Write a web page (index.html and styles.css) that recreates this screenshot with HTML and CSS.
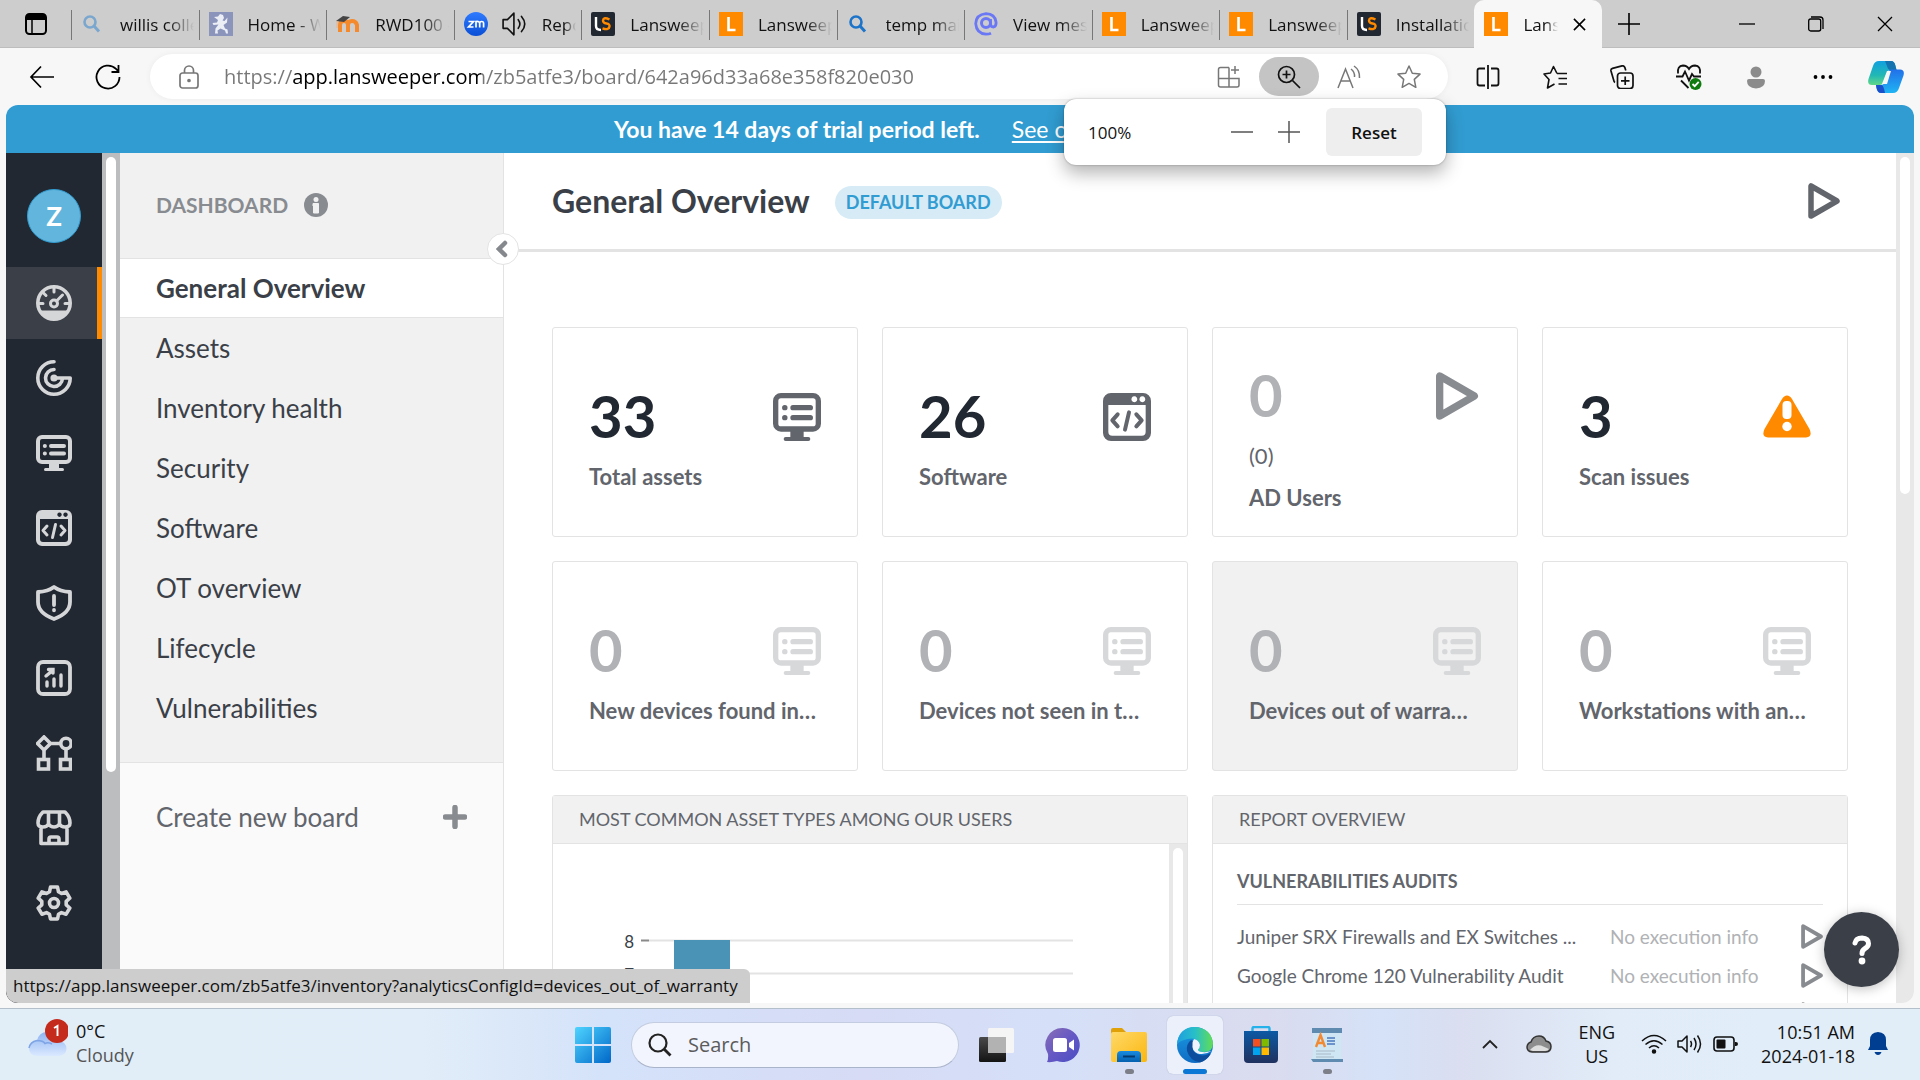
FILE: index.html
```html
<!DOCTYPE html>
<html lang="en">
<head>
    <meta charset="UTF-8">
    <meta name="viewport" content="width=device-width, initial-scale=1.0">
    <title>Lansweeper</title>
    <link rel="stylesheet" href="styles.css">
</head>
<body>

    <!-- Shared icons -->
    <svg class="defs" width="0" height="0" aria-hidden="true">
        <defs>
            <linearGradient id="gZoom" x1="0" y1="0" x2="0" y2="1"><stop offset="0" stop-color="#2f7bff"/><stop offset="1" stop-color="#0a4fd6"/></linearGradient>
            <linearGradient id="gWin" x1="0" y1="0" x2="1" y2="1"><stop offset="0" stop-color="#4fd4ff"/><stop offset="1" stop-color="#0067c8"/></linearGradient>
            <linearGradient id="gChat" x1="0" y1="0" x2="1" y2="1"><stop offset="0" stop-color="#8a6fb5"/><stop offset="0.5" stop-color="#6558c4"/><stop offset="1" stop-color="#4a4ec4"/></linearGradient>
            <linearGradient id="gFolder" x1="0" y1="0" x2="1" y2="1"><stop offset="0" stop-color="#ffd968"/><stop offset="1" stop-color="#fbb710"/></linearGradient>
            <linearGradient id="gFolderBlue" x1="0" y1="0" x2="0" y2="1"><stop offset="0" stop-color="#1a8be0"/><stop offset="1" stop-color="#0560b0"/></linearGradient>
            <linearGradient id="gEdgeTop" x1="0" y1="0" x2="1" y2="0"><stop offset="0" stop-color="#1f9fe0"/><stop offset="0.5" stop-color="#28bfc8"/><stop offset="1" stop-color="#62dd54"/></linearGradient>
            <linearGradient id="gEdgeLow" x1="0" y1="0" x2="0" y2="1"><stop offset="0" stop-color="#1b9be2"/><stop offset="1" stop-color="#0f6cc4"/></linearGradient>
            <linearGradient id="gStore" x1="0" y1="0" x2="0" y2="1"><stop offset="0" stop-color="#0c59a4"/><stop offset="1" stop-color="#20325f"/></linearGradient>
            <linearGradient id="gCloud" x1="0" y1="0" x2="0" y2="1"><stop offset="0" stop-color="#8db4f2"/><stop offset="1" stop-color="#dbe9ff"/></linearGradient>
            <linearGradient id="gView" x1="0" y1="0" x2="0" y2="1"><stop offset="0" stop-color="#4a4a4a"/><stop offset="1" stop-color="#141414"/></linearGradient>
            <linearGradient id="gCoA" x1="0" y1="0" x2="0" y2="1"><stop offset="0" stop-color="#12a0e0"/><stop offset="0.6" stop-color="#22b8b4"/><stop offset="1" stop-color="#62d888"/></linearGradient>
            <linearGradient id="gCoB" x1="0" y1="0" x2="0" y2="1"><stop offset="0" stop-color="#2270e8"/><stop offset="1" stop-color="#1fb4f4"/></linearGradient>

            <symbol id="monitor" viewBox="0 0 36 36">
                <rect x="2" y="2" width="32" height="25" rx="4" fill="none" stroke="currentColor" stroke-width="4"/>
                <path d="M13 28h10v5h3.500a1.500 1.500 0 0 1 0 3h-17a1.500 1.500 0 0 1 0-3H13z" fill="currentColor"/>
                <g stroke="currentColor" stroke-width="4" stroke-linecap="round"><path d="M15 11h13M15 18.500h13M8.800 11h.1M8.800 18.500h.1"/></g>
            </symbol>
            <symbol id="code" viewBox="0 0 36 36">
                <path fill="currentColor" fill-rule="evenodd" d="M6 0h24a6 6 0 0 1 6 6v24a6 6 0 0 1-6 6H6a6 6 0 0 1-6-6V6a6 6 0 0 1 6-6zM4 9v20a3 3 0 0 0 3 3h22a3 3 0 0 0 3-3V9zM23.500 2.500a2.200 2.200 0 1 0 .01 0zM29.500 2.500a2.200 2.200 0 1 0 .01 0z"/>
                <path d="M11 16l-4 4.500 4 4.500M25 16l4 4.500-4 4.500M19.500 14.500l-3 13" fill="none" stroke="currentColor" stroke-width="3" stroke-linecap="round" stroke-linejoin="round"/>
            </symbol>
            <symbol id="play" viewBox="0 0 32 36">
                <path d="M3 3v30L29 18z" fill="none" stroke="currentColor" stroke-width="5.500" stroke-linejoin="round"/>
            </symbol>
            <symbol id="favL" viewBox="0 0 24 24">
                <rect width="24" height="24" fill="#ff8a00"/><path d="M9.500 5v13h7" fill="none" stroke="#fff" stroke-width="2.600"/>
            </symbol>
            <symbol id="favLS" viewBox="0 0 24 24">
                <rect width="24" height="24" rx="2" fill="#222831"/>
                <path d="M5 5v9q0 4 5 4" fill="none" stroke="#fff" stroke-width="2.400"/>
                <path d="M18.500 7.500q-6-3-6.500 1 0 2.500 3.500 3t3 3q-.5 4-7 1.800" fill="none" stroke="#ff8a00" stroke-width="2.400"/>
            </symbol>
            <symbol id="favSearch" viewBox="0 0 24 24">
                <circle cx="9" cy="10" r="5.500" fill="none" stroke="currentColor" stroke-width="2.600"/><path d="M13 14l5 5.500" stroke="currentColor" stroke-width="3"/>
            </symbol>
            <symbol id="speaker" viewBox="0 0 24 24">
                <path d="M1 8h4l6-6v20l-6-6H1zM15 8q3 4 0 8M18 5q6 7 0 14" fill="none" stroke="currentColor" stroke-width="1.500" stroke-linejoin="round" stroke-linecap="round"/>
            </symbol>
        </defs>
    </svg>

    <header class="tabstrip">
        <button class="tab-actions" aria-label="Tab actions">
            <svg width="22" height="22" viewBox="0 0 22 22"><rect x="1" y="1" width="20" height="20" rx="3.500" fill="none" stroke="#000" stroke-width="2"/><path d="M1 2h20v5H1z"/><path d="M7 7v14" stroke="#000" stroke-width="1.500"/></svg>
        </button>
        <nav class="tabs">
            <button class="tab"><svg class="fav pale"><use href="#favSearch"/></svg><span>willis colle</span></button>
            <button class="tab"><svg class="fav" viewBox="0 0 24 24"><rect width="24" height="24" fill="#8b94bb"/><path d="M11 2l3 1 1 3-1.500 2.500 2 .5 3-3.500-.5 5-3.500 2.500 1.500 3.500 2.500 1 .5 4h-2l-1-3-4.500-2-3 2 .5 3H6l.5-5 3-4-5 .5-1-2 4.500-.5L9 8 5 5l4-.500z" fill="#eceef6"/></svg><span>Home - Wil</span></button>
            <button class="tab"><svg class="fav" viewBox="0 0 24 24"><path d="M4 20v-7q0-4 4-4t4 4v7M12 13q0-4 4-4t5 4v7" fill="none" stroke="#f58a2c" stroke-width="4"/><path d="M0 9l7-5 7 1-6 5z" fill="#444"/><path d="M1 9v7" stroke="#f0b27f"/></svg><span>RWD100 -</span></button>
            <button class="tab tab-audio"><svg class="fav" viewBox="0 0 24 24"><circle cx="12" cy="12" r="12" fill="url(#gZoom)"/><path d="M4.500 9.500h5l-5 5.500h5M12 15.500v-6q3.700-.5 3.700 2v4M15.700 11.500q0-2 2-2t1.900 2v4" fill="none" stroke="#fff" stroke-width="1.700"/></svg><svg class="sound"><use href="#speaker"/></svg><span>Report</span></button>
            <button class="tab"><svg class="fav"><use href="#favLS"/></svg><span>Lansweeper</span></button>
            <button class="tab"><svg class="fav"><use href="#favL"/></svg><span>Lansweeper</span></button>
            <button class="tab"><svg class="fav blue"><use href="#favSearch"/></svg><span>temp mail</span></button>
            <button class="tab"><svg class="fav" viewBox="0 0 24 24"><circle cx="12" cy="11" r="4.500" fill="none" stroke="#6b78f5" stroke-width="3"/><path d="M16.500 7v5q0 3 3 3 3-1 2.500-5-1-8-10-8.300-10 1-10.300 10 .8 10 10.300 10.500 3 0 5-1" fill="none" stroke="#6b78f5" stroke-width="2.800"/></svg><span>View mess</span></button>
            <button class="tab"><svg class="fav"><use href="#favL"/></svg><span>Lansweeper</span></button>
            <button class="tab"><svg class="fav"><use href="#favL"/></svg><span>Lansweeper</span></button>
            <button class="tab"><svg class="fav"><use href="#favLS"/></svg><span>Installation</span></button>
            <button class="tab active"><svg class="fav"><use href="#favL"/></svg><span>Lansw</span><svg class="close" viewBox="0 0 14 14"><path d="M1 1l12 12M13 1L1 13" stroke="#000" stroke-width="1.700"/></svg></button>
        </nav>
        <div class="window-controls">
            <button class="new-tab" aria-label="New tab"><svg width="22" height="22" viewBox="0 0 22 22"><path d="M11 0v22M0 11h22" stroke="#000" stroke-width="1.600"/></svg></button>
            <button aria-label="Minimize"><svg width="16" height="16" viewBox="0 0 16 16"><path d="M0 8h16" stroke="#000" stroke-width="1.300"/></svg></button>
            <button aria-label="Restore"><svg width="16" height="16" viewBox="0 0 16 16"><rect x=".7" y="3" width="12" height="12" rx="2" fill="none" stroke="#000" stroke-width="1.300"/><path d="M3 1h9q3 0 3 3v9" fill="none" stroke="#000" stroke-width="1.300"/></svg></button>
            <button aria-label="Close"><svg width="16" height="16" viewBox="0 0 16 16"><path d="M1 1l14 14M15 1L1 15" stroke="#000" stroke-width="1.300"/></svg></button>
        </div>
    </header>

    <div class="toolbar">
        <button aria-label="Back"><svg width="26" height="26" viewBox="0 0 26 26"><path d="M25 13H2M12 2.500L2 13l10 10.500" fill="none" stroke="#000" stroke-width="1.700"/></svg></button>
        <button aria-label="Refresh"><svg width="26" height="26" viewBox="0 0 26 26"><path d="M24.500 13A11.500 11.500 0 1 1 21 4.800l2 2M23.500 1v7h-7" fill="none" stroke="#000" stroke-width="1.800"/></svg></button>
        <div class="address">
            <svg class="lock" width="20" height="24" viewBox="0 0 20 24" fill="none" stroke="#777" stroke-width="1.700"><rect x="1" y="8" width="18" height="15" rx="2.500"/><path d="M5.500 8V5.500a4.500 4.500 0 0 1 9 0V8"/><circle cx="10" cy="15.500" r="1" fill="#777"/></svg>
            <input class="url" type="text" aria-label="Address bar" value="https://app.lansweeper.com/zb5atfe3/board/642a96d33a68e358f820e030">
            <button aria-label="App available"><svg width="24" height="24" viewBox="0 0 24 24" fill="none" stroke="#777" stroke-width="1.500"><path d="M12 2.500H3.500q-2 0-2 2v15.500q0 2 2 2H20q2 0 2-2v-6.500H1.500M12 2.500V22M18 1v8M14 5h8"/></svg></button>
            <button class="zoom-button" aria-label="Zoom"><svg width="24" height="24" viewBox="0 0 24 24" fill="none" stroke="#111" stroke-width="1.700"><circle cx="9.500" cy="9.500" r="8"/><path d="M15.500 15.500L23 23M9.500 5.500v8M5.500 9.500h8"/></svg></button>
            <button aria-label="Read aloud"><svg width="24" height="24" viewBox="0 0 24 24" fill="none" stroke="#777" stroke-width="1.500"><path d="M1 23L8.500 4 16 23M4 16h9M14 4q4 3 3.500 8M17 1q6 4 5.500 12"/></svg></button>
            <button aria-label="Favorite"><svg width="24" height="24" viewBox="0 0 24 24" fill="none" stroke="#777" stroke-width="1.500" stroke-linejoin="round"><path d="M12 1l3.300 7.200 7.700.9-5.700 5.300 1.500 7.900L12 18.400l-6.800 3.900 1.500-7.900L1 9.100l7.700-.9z"/></svg></button>
        </div>
        <div class="toolbar-icons">
            <button aria-label="Split screen"><svg width="24" height="24" viewBox="0 0 24 24" fill="none" stroke="#111" stroke-width="1.800"><path d="M9 3.500H3.500q-2 0-2 2v13q0 2 2 2H9M15 3.500h5.500q2 0 2 2v13q0 2-2 2H15M12 0v24"/></svg></button>
            <button aria-label="Favorites"><svg width="24" height="24" viewBox="0 0 24 24" fill="none" stroke="#111" stroke-width="1.600" stroke-linejoin="round"><path d="M14 8.500L10.500 1.500 7.500 8 1 9l5 5.500L4.500 23l7-4M14 8.500h10M15.500 13.500H24M15.500 19H24"/></svg></button>
            <button aria-label="Collections"><svg width="24" height="24" viewBox="0 0 24 24" fill="none" stroke="#111" stroke-width="1.700"><rect x="7.500" y="8" width="15.500" height="15.500" rx="3"/><path d="M5 17.500q-1-.5-1.500-3L1 6q-.5-2 1.500-2.600L12 .9q2-.5 2.800 1.500l1 3M15.200 11.500v8.500M11 15.800h8.500"/></svg></button>
            <button aria-label="Browser essentials"><svg width="26" height="26" viewBox="0 0 26 26" fill="none" stroke="#111" stroke-width="1.800"><path d="M2 9.500Q1 2 7 1.500q4 0 6 3.500 2-3.500 6-3.500 6 .5 5 8M0 12.500h6.500l2.500-5 4 9 3-6.500 2 2.500h7M5 16.500l7.500 7.500"/><circle cx="19.500" cy="20" r="6" fill="#0f7b0f" stroke="none"/><path d="M16.500 20l2.200 2.200 4-4.400" stroke="#fff"/></svg></button>
            <button class="profile" aria-label="Profile"><svg width="20" height="24" viewBox="0 0 20 24" fill="#8c8c8c"><circle cx="10" cy="7" r="5.500"/><path d="M1 16q0-2 2-2h14q2 0 2 2 0 7-9 7.500Q1 23 1 16z"/></svg></button>
            <button aria-label="Settings and more"><svg width="20" height="6" viewBox="0 0 20 6"><circle cx="2.500" cy="3" r="1.900"/><circle cx="10" cy="3" r="1.900"/><circle cx="17.500" cy="3" r="1.900"/></svg></button>
            <button class="copilot" aria-label="Copilot"><svg width="36" height="34" viewBox="0 0 36 34"><path d="M11 1h12q3.500 0 4.500 5l1 4h-6q-3 0-4 4l-3 8q-1 3-4 3H4q-5 0-3.500-6L5 6Q6.500 1 11 1z" fill="url(#gCoA)"/><path d="M17 1h6q3.500 0 4.500 5l1 4h-6q-2.500 0-3.500-4z" fill="#1573b0"/><path d="M25 33H13q-3.500 0-4.500-5l-.5-3h5q3 0 4-4l2.500-8q1-3.500 4-3.500H32q5 0 3.500 6L31 28q-1.500 5-6 5z" fill="url(#gCoB)"/><path d="M8 25h5.500q2 0 3.500 8h-4q-3.500 0-4.500-5z" fill="#1a50cc"/><path d="M19 11h4l-4 13h-5z" fill="#f7f7f7"/></svg></button>
        </div>
    </div>

    <main class="page">
        <div class="trial">
            <strong>You have 14 days of trial period left.</strong>
            <a href="#">See our plans</a>
        </div>

        <div class="app">
            <nav class="rail">
                <a class="avatar" href="#">Z</a>
                <a class="rail-item current" href="#" aria-label="Dashboard"><svg viewBox="0 0 36 36"><circle cx="18" cy="18" r="16.200" fill="none" stroke="currentColor" stroke-width="3.600"/><path d="M3 25.500h30Q28 35 18 35T3 25.500z" fill="currentColor"/><circle cx="18" cy="18.500" r="3.500" fill="none" stroke="currentColor" stroke-width="3"/><path d="M20.500 16l6-6M18 3v4M7.500 8l2.500 2.500M3 18.500h4M29 18.500h4" stroke="currentColor" stroke-width="3" stroke-linecap="round"/></svg></a>
                <a class="rail-item" href="#" aria-label="Scanning"><svg viewBox="0 0 36 36" fill="none" stroke="currentColor" stroke-width="3.600" stroke-linecap="round" stroke-linejoin="round"><path d="M18 1.800A16.200 16.200 0 1 0 34.200 18H18M18 9.500a8.500 8.500 0 1 0 8.500 9"/><circle cx="18" cy="18" r="1.800" fill="currentColor"/></svg></a>
                <a class="rail-item" href="#" aria-label="Inventory"><svg><use href="#monitor"/></svg></a>
                <a class="rail-item" href="#" aria-label="Software"><svg><use href="#code"/></svg></a>
                <a class="rail-item" href="#" aria-label="Security"><svg viewBox="0 0 36 36" fill="none" stroke="currentColor" stroke-width="3.800" stroke-linecap="round" stroke-linejoin="round"><path d="M18 2q6 4.500 16 5v10q0 11-16 17Q2 28 2 17V7q10-.5 16-5z"/><path d="M18 11v9M18 25v.3"/></svg></a>
                <a class="rail-item" href="#" aria-label="Reports"><svg viewBox="0 0 36 36" fill="none" stroke="currentColor" stroke-width="3.800" stroke-linecap="round"><rect x="2" y="2" width="32" height="32" rx="5"/><path d="M11 22v4M18 19v7M25 15v11M10 16l6-5M12.500 9.500h4.500v3.500" stroke-width="3.400"/></svg></a>
                <a class="rail-item" href="#" aria-label="Diagrams"><svg viewBox="0 0 36 36" fill="none" stroke="currentColor" stroke-width="3.600"><path d="M8 2L14.500 8.500 8 15 1.500 8.500zM14 8.500h10M8 15v9M30 15v9"/><circle cx="30" cy="8.500" r="5.200"/><rect x="2.500" y="24.500" width="10" height="9.500"/><rect x="24.500" y="24.500" width="10" height="9.500"/></svg></a>
                <a class="rail-item" href="#" aria-label="Marketplace"><svg viewBox="0 0 36 36" fill="none" stroke="currentColor" stroke-width="3.600" stroke-linejoin="round"><path d="M7 2h22q5 5 5 11 0 4-5 4-4 0-5.500-3-2 3-5.500 3t-5.500-3Q11 17 7 17q-5 0-5-4Q2 7 7 2zM12.500 3v11M23.500 3v11M5 17v16.500h26V17M13 33v-4q0-2 2-2h6q2 0 2 2v4"/></svg></a>
                <a class="rail-item" href="#" aria-label="Settings"><svg viewBox="0 0 36 36" fill="none" stroke="currentColor" stroke-width="3.600" stroke-linejoin="round"><path d="M14.500 2h7l1 4.800 3 1.700 4.600-1.600 3.700 6.200-3.600 3.200v3.500l3.600 3.200-3.700 6.200-4.600-1.600-3 1.700-1 4.700h-7l-1-4.700-3-1.700-4.600 1.600L2.200 23l3.600-3.200v-3.500l-3.600-3.200 3.700-6.200 4.600 1.600 3-1.700z"/><circle cx="18" cy="18" r="4.500"/></svg></a>
            </nav>
            <div class="rail-scroll"><div class="rail-thumb"></div></div>

            <aside class="sidebar">
                <div class="sidebar-head">
                    <span>DASHBOARD</span>
                    <svg width="24" height="24" viewBox="0 0 24 24"><circle cx="12" cy="12" r="12" fill="#888b90"/><circle cx="12" cy="6.500" r="2.500" fill="#f1f1f1"/><path d="M9 10.500h5.500V20h-5v-7H9z" fill="#f1f1f1" stroke="#f1f1f1" stroke-linejoin="round"/></svg>
                </div>
                <nav class="boards">
                    <a class="board selected" href="#">General Overview</a>
                    <a class="board" href="#">Assets</a>
                    <a class="board" href="#">Inventory health</a>
                    <a class="board" href="#">Security</a>
                    <a class="board" href="#">Software</a>
                    <a class="board" href="#">OT overview</a>
                    <a class="board" href="#">Lifecycle</a>
                    <a class="board" href="#">Vulnerabilities</a>
                </nav>
                <button class="create">
                    <span>Create new board</span>
                    <svg width="24" height="24" viewBox="0 0 24 24"><path d="M12 2.500v19M2.500 12h19" stroke="#888b90" stroke-width="5.500" stroke-linecap="round"/></svg>
                </button>
                <button class="collapse" aria-label="Collapse sidebar"><svg width="14" height="18" viewBox="0 0 14 18"><path d="M9 3L3 9l6 6" fill="none" stroke="#85888d" stroke-width="4.500" stroke-linecap="round"/></svg></button>
            </aside>

            <section class="content">
                <div class="content-head">
                    <h1>General Overview</h1>
                    <span class="pill">DEFAULT BOARD</span>
                    <button class="run-all" aria-label="Run"><svg width="32" height="36"><use href="#play"/></svg></button>
                </div>

                <div class="widgets">
                    <a class="card" href="#"><div class="figure"><b>33</b><svg><use href="#monitor"/></svg></div><p>Total assets</p></a>
                    <a class="card" href="#"><div class="figure"><b>26</b><svg><use href="#code"/></svg></div><p>Software</p></a>
                    <a class="card with-sub empty" href="#"><div class="figure"><b>0</b><svg class="play"><use href="#play"/></svg></div><small>(0)</small><p>AD Users</p></a>
                    <a class="card" href="#"><div class="figure"><b>3</b><svg viewBox="0 0 48 48"><path d="M24 2.500q3 0 5 3.500l17.500 30q3.500 8-3.500 8.500H5q-7-.5-3.500-8.500L19 6q2-3.500 5-3.500z" fill="#ff8a00"/><rect x="19.500" y="8" width="9" height="18" rx="4" fill="#fff"/><circle cx="24" cy="33.500" r="4.700" fill="#fff"/></svg></div><p>Scan issues</p></a>
                    <a class="card empty" href="#"><div class="figure"><b>0</b><svg><use href="#monitor"/></svg></div><p>New devices found in…</p></a>
                    <a class="card empty" href="#"><div class="figure"><b>0</b><svg><use href="#monitor"/></svg></div><p>Devices not seen in t…</p></a>
                    <a class="card empty hovered" href="#"><div class="figure"><b>0</b><svg><use href="#monitor"/></svg></div><p>Devices out of warra…</p></a>
                    <a class="card empty" href="#"><div class="figure"><b>0</b><svg><use href="#monitor"/></svg></div><p>Workstations with an…</p></a>

                    <article class="panel">
                        <h2>MOST COMMON ASSET TYPES AMONG OUR USERS</h2>
                        <div class="chart-wrap">
                            <svg class="chart" viewBox="0 0 616 320" width="616" height="320">
                                <path d="M96 96.500h424M96 129.500h424M96 162.500h424" stroke="#e3e3e3" stroke-width="2"/>
                                <path d="M88 96.500h8M88 129.500h8M88 162.500h8" stroke="#8a8a8a" stroke-width="2"/>
                                <rect x="121" y="96" width="56" height="224" fill="#4a93b6"/>
                                <text x="81" y="104" text-anchor="end">8</text>
                                <text x="81" y="137" text-anchor="end">7</text>
                            </svg>
                            <div class="panel-scroll"><div class="panel-thumb"></div></div>
                        </div>
                    </article>

                    <article class="panel">
                        <h2>REPORT OVERVIEW</h2>
                        <div class="reports">
                            <h3>VULNERABILITIES AUDITS</h3>
                            <ul>
                                <li><a href="#">Juniper SRX Firewalls and EX Switches ...</a><span>No execution info</span><button aria-label="Run report"><svg width="22" height="25"><use href="#play"/></svg></button></li>
                                <li><a href="#">Google Chrome 120 Vulnerability Audit</a><span>No execution info</span><button aria-label="Run report"><svg width="22" height="25"><use href="#play"/></svg></button></li>
                                <li><a href="#"></a><span></span><button aria-label="Run report"><svg width="22" height="25"><use href="#play"/></svg></button></li>
                            </ul>
                        </div>
                    </article>
                </div>
            </section>
            <div class="main-scroll"><div class="main-thumb"></div></div>
        </div>

        <button class="help" aria-label="Help"><svg width="24" height="32" viewBox="0 0 24 32"><path d="M5 9q1-5 7-5 6.500.5 6.500 5.500 0 3-3.500 5-3 1.800-3 5" fill="none" stroke="#fff" stroke-width="5" stroke-linecap="round"/><circle cx="12" cy="27" r="3.400" fill="#fff"/></svg></button>
        <div class="status">https://app.lansweeper.com/zb5atfe3/inventory?analyticsConfigId=devices_out_of_warranty</div>
    </main>

    <div class="zoom-popup">
        <span>100%</span>
        <button aria-label="Zoom out"><svg width="22" height="22" viewBox="0 0 22 22"><path d="M0 11h22" stroke="#555" stroke-width="1.500"/></svg></button>
        <button aria-label="Zoom in"><svg width="22" height="22" viewBox="0 0 22 22"><path d="M0 11h22M11 0v22" stroke="#555" stroke-width="1.500"/></svg></button>
        <button class="reset">Reset</button>
    </div>

    <footer class="taskbar">
        <button class="weather">
            <svg width="40" height="44" viewBox="0 0 40 44"><path d="M9 37q-8-1-8-8 1-7 8-7.500Q11 13 19 13q9 0 11 9 8 0 8.500 8-.5 6-7.500 7z" fill="url(#gCloud)"/><path d="M1 29q1-6 8-7.500 6 0 8 3 3-1.500 7 .5" fill="none" stroke="#7ea4e6" stroke-width="1.500"/><circle cx="29" cy="12" r="12" fill="#c42b1c"/><path d="M26 9l3.500-2v10" fill="none" stroke="#fff" stroke-width="1.900"/></svg>
            <span>0°C<br><em>Cloudy</em></span>
        </button>
        <div class="dock">
            <button class="dock-item" aria-label="Start"><svg width="36" height="36" viewBox="0 0 36 36" fill="url(#gWin)"><path d="M2 0h15v17H0V2q0-2 2-2zM19 0h15q2 0 2 2v15H19zM0 19h17v17H2q-2 0-2-2zM19 19h17v15q0 2-2 2H19z"/></svg></button>
            <label class="search">
                <svg width="24" height="24" viewBox="0 0 24 24"><circle cx="10" cy="10" r="8.500" fill="none" stroke="#222" stroke-width="2.200"/><path d="M16 16l6.500 6.500" stroke="#222" stroke-width="2.800"/></svg>
                <input type="text" placeholder="Search" aria-label="Search">
            </label>
            <button class="dock-item" aria-label="Task view"><svg width="36" height="36" viewBox="0 0 36 36"><rect x="9" y="1" width="26" height="25" rx="1.500" fill="#f5f5f5"/><rect x="0" y="10" width="27" height="25" rx="1.500" fill="url(#gView)"/><path d="M9 10h18v16H9z" fill="#b2b2b2"/></svg></button>
            <button class="dock-item" aria-label="Chat"><svg width="36" height="36" viewBox="0 0 36 36"><path d="M18 1a17 17 0 1 1-6 33q-5 1.500-10 1 1.500-3 1-8A17 17 0 0 1 18 1z" fill="url(#gChat)"/><rect x="8" y="11" width="14" height="14" rx="2.500" fill="#fff"/><path d="M24 16l5-3.500v11L24 20z" fill="#fff"/></svg></button>
            <button class="dock-item open" aria-label="File Explorer"><svg width="38" height="36" viewBox="0 0 38 36"><path d="M1 3q0-2 2-2h9l4 4v7H1z" fill="#e0a008"/><rect x="1" y="5" width="36" height="30" rx="2" fill="url(#gFolder)"/><path d="M7 35v-7q0-4 4-4h16q4 0 4 4v7z" fill="url(#gFolderBlue)"/><path d="M13 29.500h12" stroke="#04396e" stroke-width="2"/></svg></button>
            <button class="dock-item running" aria-label="Microsoft Edge"><svg width="38" height="38" viewBox="0 0 38 38"><circle cx="19" cy="19" r="18" fill="url(#gEdgeLow)"/><path d="M1 18Q3 1 19 1q16 1 18 16 0 9-9 9-6 0-6-2.500 2-1.500 2-4.500-1-6-8-6.500Q6 13 1 18z" fill="url(#gEdgeTop)"/><path d="M15 14q-5 4-4 11 3 10 13 11.500 7-2 10.500-8.500-1-1-3 .5-7 2.500-12-1.500-4.500-4-2-9 .5-3-2.500-4z" fill="#0d4d9e"/><path d="M22 23.500q2-1.500 2-4.500-1-5-6-6-2 3-1.500 5.500-1 6 5 9 7 2 14-2.500-5 1.500-9 1-4.500-.5-4.500-2.500z" fill="#eef2fc"/></svg></button>
            <button class="dock-item" aria-label="Microsoft Store"><svg width="36" height="38" viewBox="0 0 36 38"><path d="M9.500 7V2.500q0-1.500 1.500-1.500h14q1.500 0 1.500 1.500V7" fill="none" stroke="#25b2ea" stroke-width="2.400"/><path d="M1 5h34v28q0 4-4 4H5q-4 0-4-4z" fill="url(#gStore)"/><path d="M10 13h7.500v7.500H10z" fill="#f25022"/><path d="M18.500 13H26v7.500h-7.500z" fill="#7fba00"/><path d="M10 21.500h7.500V29H10z" fill="#00a4ef"/><path d="M18.500 21.500H26V29h-7.500z" fill="#ffb900"/></svg></button>
            <button class="dock-item open" aria-label="WordPad"><svg width="32" height="36" viewBox="0 0 32 36"><path d="M2 3h28v25l2 6H0l2-6z" fill="#cfe6f5"/><path d="M1 1h30v5H1zM0 32h32v3H2z" fill="#5f8bb0"/><path d="M5 20l4.500-12L14 20M6.500 16h6" fill="none" stroke="#f28a34" stroke-width="2.400"/><path d="M16 11h8M16 14h8M16 17h8" stroke="#4a79bd" stroke-width="1.500"/><path d="M5 24h19M5 27h15M5 30h18" stroke="#a8b8c4"/></svg></button>
        </div>
        <div class="tray">
            <button aria-label="Show hidden icons"><svg width="16" height="10" viewBox="0 0 16 10"><path d="M1 9l7-7 7 7" fill="none" stroke="#222" stroke-width="1.800"/></svg></button>
            <button class="onedrive" aria-label="OneDrive"><svg width="26" height="18" viewBox="0 0 26 18"><path d="M6 17q-5-.5-5-5 .5-4 4-5Q7 1 13 1q5 0 7 5 5 1 5 5.500 0 5-5 5.500z" fill="#8d8d8d" stroke="#333" stroke-width="1.500"/><path d="M4 15q5-6 11-4.500l8 3.500q-1 2-4 2H7z" fill="#dedede"/></svg></button>
            <button class="lang">ENG<br>US</button>
            <button class="system" aria-label="Network, volume and battery">
                <svg width="26" height="20" viewBox="0 0 26 20" fill="none" stroke="#111" stroke-width="1.500"><path d="M1 7Q13-4 25 7M4.500 10.500q8.500-7.500 17 0M8 14q5-4.500 10 0"/><circle cx="13" cy="17.500" r="1.500" fill="#111"/></svg>
                <svg width="26" height="20" viewBox="0 0 26 20" fill="none" stroke="#111" stroke-width="1.500"><path d="M1 7h4l5-5v16l-5-5H1zM13.500 7q2 3 0 6M17 4q4 6 0 12M20.500 1.500q6 8.500 0 17" stroke-linejoin="round"/></svg>
                <svg width="26" height="20" viewBox="0 0 26 20"><rect x="1" y="3" width="20" height="14" rx="3" fill="none" stroke="#111" stroke-width="1.600"/><rect x="3.500" y="5.500" width="9" height="9" rx="1" fill="#111"/><path d="M22 8q3-.5 3 2t-3 2z" fill="#111"/></svg>
            </button>
            <button class="clock">10:51 AM<br>2024-01-18</button>
            <button class="bell" aria-label="Notifications"><svg width="20" height="24" viewBox="0 0 20 24" fill="#003e92"><path d="M10 0q8 .5 8 8v6l2 4H0l2-4V8q0-7.500 8-8zM6.500 20h7q-1 3-3.500 3t-3.500-3z"/></svg></button>
        </div>
    </footer>

</body>
</html>
```

FILE: styles.css
```css
* {
    box-sizing: border-box;
}
body {
    margin: 0;
    height: 100vh;
    overflow: hidden;
    display: flex;
    flex-direction: column;
    position: relative;
    background: #f7f7f7;
    font-family: "Open Sans", sans-serif;
    font-size: 17px;
    color: #111;
}
button {
    display: flex;
    align-items: center;
    justify-content: center;
    padding: 0;
    border: none;
    background: none;
    font-family: inherit;
    font-size: inherit;
    color: inherit;
}
a {
    color: inherit;
    text-decoration: none;
}
h1, h2, h3, p, ul {
    margin: 0;
    padding: 0;
}
.defs {
    position: absolute;
}

/* Tab strip */
.tabstrip {
    display: flex;
    height: 48px;
    background: #cdcdcd;
    border-bottom: 1px solid #bdbdbd;
}
.tab-actions {
    flex: none;
    width: 71px;
}
.tabs {
    flex: 1;
    min-width: 0;
    display: grid;
    grid-template-columns: repeat(12, minmax(0, 1fr));
}
.tab {
    min-width: 0;
    justify-content: flex-start;
    gap: 15px;
    padding: 0 5px 0 10px;
    position: relative;
}
.tab:not(.active)::before {
    content: "";
    position: absolute;
    left: 0;
    top: 10px;
    bottom: 8px;
    width: 1px;
    background: #777;
}
.tab span {
    flex: 1;
    min-width: 0;
    overflow: hidden;
    white-space: nowrap;
    text-align: left;
    mask-image: linear-gradient(90deg, #000 65%, transparent);
}
.tab-audio {
    gap: 14px;
}
.fav {
    flex: none;
    width: 24px;
    height: 24px;
}
.fav.pale {
    color: #7ba7cf;
}
.fav.blue {
    color: #1b74c9;
}
.sound {
    flex: none;
    width: 26px;
    height: 26px;
}
.tab.active {
    background: #f7f7f7;
    border-radius: 10px 10px 0 0;
    padding-right: 16px;
    height: 48px;
}
.close {
    flex: none;
    width: 13px;
    height: 13px;
}
.window-controls {
    flex: none;
    width: 318px;
    display: flex;
    padding-right: 1px;
}
.window-controls button {
    width: 69px;
}
.window-controls .new-tab {
    width: 54px;
    margin-right: auto;
}

/* Toolbar */
.toolbar {
    display: flex;
    align-items: center;
    height: 57px;
    padding: 0 4px 0 9px;
}
.toolbar > button {
    width: 66px;
}
.address {
    flex: 1;
    display: flex;
    align-items: center;
    height: 45px;
    border-radius: 23px;
    background: #fff;
    box-shadow: 0 0 6px rgba(0, 0, 0, 0.05);
    padding-left: 29px;
    padding-right: 9px;
    margin-left: 9px;
}
.url {
    flex: 1;
    min-width: 0;
    margin-left: 25px;
    padding: 0;
    border: none;
    outline: none;
    font: 20px/28px "Open Sans", sans-serif;
    /* scheme and path are dimmed, the host stays black */
    background: linear-gradient(90deg, #777 68px, #000 68px, #000 257px, #777 257px);
    background-clip: text;
    -webkit-background-clip: text;
    color: transparent;
}
.address button {
    width: 60px;
    height: 39px;
    border-radius: 20px;
}
.address .zoom-button {
    background: #c4c4c4;
}
.toolbar-icons {
    display: flex;
    align-items: center;
    padding-left: 6px;
}
.toolbar-icons button {
    width: 67px;
    height: 36px;
}
.toolbar-icons .copilot {
    width: 60px;
}

/* Page frame */
.page {
    flex: 1;
    min-height: 0;
    display: flex;
    flex-direction: column;
    position: relative;
    margin: 0 6px 5px;
    border-radius: 12px;
    overflow: hidden;
    background: #fff;
    font-family: Lato, sans-serif;
}
.trial {
    display: flex;
    align-items: center;
    gap: 32px;
    height: 48px;
    padding-left: 608px;
    background: #319cd1;
    color: #fff;
    font-size: 23px;
    line-height: 28px;
}
.trial a {
    text-decoration: underline;
    text-underline-offset: 3px;
}
.app {
    flex: 1;
    min-height: 0;
    display: flex;
}

/* Dark icon rail */
.rail {
    width: 96px;
    background: #222831;
    color: #d5d6d8;
    padding-top: 36px;
    display: flex;
    flex-direction: column;
    gap: 3px;
}
.avatar {
    width: 54px;
    height: 54px;
    margin: 0 auto 21px;
    border-radius: 50%;
    border: 1px solid #319cd1;
    background: #62b5dc;
    color: #fff;
    font-size: 26px;
    font-weight: bold;
    line-height: 52px;
    text-align: center;
}
.rail-item {
    height: 72px;
    flex: none;
    display: flex;
    align-items: center;
    justify-content: center;
}
.rail-item svg {
    width: 36px;
    height: 36px;
}
.rail-item.current {
    background: #3a3f48;
    box-shadow: inset -5px 0 #ff8a00;
}
.rail-scroll {
    width: 18px;
    padding: 4px;
    background: #bcbdbf;
}
.rail-thumb {
    height: 73%;
    border-radius: 5px;
    background: #fff;
}

/* Board list */
.sidebar {
    width: 384px;
    position: relative;
    border-right: 1px solid #e3e3e3;
    background: #fafafa;
}
.sidebar-head {
    height: 105px;
    display: flex;
    align-items: center;
    gap: 16px;
    padding: 0 36px 2px;
    background: #f1f1f1;
    color: #888b90;
    font-size: 21px;
    font-weight: bold;
}
.boards {
    display: flex;
    flex-direction: column;
    padding-bottom: 24px;
    border-bottom: 1px solid #e3e3e3;
    background: #f1f1f1;
}
.board {
    padding: 0 36px;
    font-size: 26px;
    line-height: 60px;
    color: #3a3f48;
}
.board.selected {
    border: solid #e3e3e3;
    border-width: 1px 0;
    background: #fff;
    line-height: 58px;
    font-weight: bold;
}
.create {
    width: 100%;
    height: 108px;
    justify-content: space-between;
    padding: 0 36px;
    font-size: 26px;
    color: #62656c;
}
.collapse {
    position: absolute;
    right: -16px;
    top: 80px;
    width: 32px;
    height: 32px;
    border: 1px solid #e3e3e3;
    border-radius: 50%;
    background: #fff;
    z-index: 1;
}

/* Board content */
.content {
    flex: 1;
    min-width: 0;
    overflow: hidden;
}
.content-head {
    display: flex;
    align-items: center;
    height: 99px;
    padding: 0 56px 0 48px;
    border-bottom: 3px solid #e3e3e3;
}
h1 {
    font-size: 32px;
    line-height: 40px;
    color: #3a3f48;
}
.pill {
    margin: 3px 0 0 25px;
    padding: 0 11px;
    border-radius: 17px;
    background: #d6ebf6;
    color: #319cd1;
    font-size: 18px;
    font-weight: bold;
    line-height: 33px;
}
.run-all {
    margin-left: auto;
    color: #62656c;
}
.widgets {
    display: grid;
    grid-template-columns: repeat(4, 1fr);
    gap: 24px;
    padding: 75px 48px 0;
}
.card {
    height: 210px;
    padding: 53px 36px 0;
    border: 1px solid #e3e3e3;
    border-radius: 3px;
    color: #62656c;
    overflow: hidden;
}
.card.with-sub {
    padding-top: 32px;
}
.card.hovered {
    background: #f1f1f1;
}
.figure {
    display: flex;
    align-items: center;
    justify-content: space-between;
    height: 72px;
}
.figure b {
    padding-bottom: 2px;
    font-size: 58px;
    line-height: 68px;
    color: #222831;
}
.figure svg {
    width: 48px;
    height: 48px;
}
.empty .figure b {
    color: #b0b2b5;
}
.empty .figure svg {
    color: #d7d8da;
}
.empty .figure .play {
    color: #888b90;
}
.card p {
    margin-top: 12px;
    font-size: 22px;
    font-weight: bold;
    line-height: 24px;
    white-space: nowrap;
}
.card small {
    display: block;
    margin-top: 12px;
    font-size: 22px;
    line-height: 24px;
}
.card small + p {
    margin-top: 18px;
}
.panel {
    grid-column: span 2;
    height: 500px;
    border: 1px solid #e3e3e3;
    border-radius: 3px;
}
.panel h2 {
    padding: 0 26px;
    background: #f1f1f1;
    border-bottom: 1px solid #e3e3e3;
    color: #62656c;
    font-size: 18px;
    font-weight: normal;
    line-height: 47px;
}
.chart-wrap {
    display: flex;
    justify-content: space-between;
    height: 450px;
}
.chart text {
    font-size: 17px;
    fill: #3a3f48;
}
.panel-scroll {
    width: 18px;
    padding: 4px;
    background: #e8e8e8;
}
.panel-thumb {
    height: 300px;
    border-radius: 5px;
    background: #fff;
}
.reports {
    padding: 15px 24px 0;
    color: #62656c;
}
.reports h3 {
    border-bottom: 1px solid #e3e3e3;
    font-size: 18px;
    line-height: 45px;
}
.reports ul {
    padding-top: 12px;
    list-style: none;
}
.reports li {
    display: flex;
    align-items: center;
    height: 39px;
    font-size: 19px;
}
.reports li a {
    flex: 1;
}
.reports li span {
    width: 191px;
    color: #b0b2b5;
}
.reports li button {
    color: #888b90;
}
.main-scroll {
    width: 18px;
    padding: 4px;
    background: #e8e8e8;
}
.main-thumb {
    height: 40%;
    border-radius: 5px;
    background: #fff;
}

/* Things floating over the page */
.help {
    position: absolute;
    right: 15px;
    bottom: 16px;
    width: 75px;
    height: 75px;
    border-radius: 50%;
    background: #3a3f48;
    box-shadow: 0 2px 12px rgba(0, 0, 0, 0.25);
}
.status {
    position: absolute;
    left: 0;
    bottom: 0;
    padding: 0 12px 0 7px;
    border-radius: 0 6px 0 12px;
    background: #cdcdcd;
    color: #111;
    font-family: "Open Sans", sans-serif;
    font-size: 17px;
    line-height: 34px;
}
.zoom-popup {
    position: absolute;
    top: 99px;
    right: 474px;
    width: 382px;
    height: 66px;
    display: flex;
    align-items: center;
    padding: 0 24px;
    border-radius: 12px;
    background: #fff;
    box-shadow: 0 0 2px rgba(0, 0, 0, 0.35), 0 8px 18px rgba(0, 0, 0, 0.3);
}
.zoom-popup span {
    flex: 1;
}
.zoom-popup button {
    width: 47px;
    height: 48px;
}
.zoom-popup .reset {
    width: 96px;
    margin-left: 14px;
    border-radius: 6px;
    background: #eee;
    font-weight: 600;
}

/* Taskbar */
.taskbar {
    display: grid;
    grid-template-columns: 1fr auto 1fr;
    height: 72px;
    border-top: 1px solid #b4bfcc;
    background: linear-gradient(90deg, #e1eef7 0%, #e1edf8 22%, #d4e2fa 32%, #d7dbf5 45%, #d5e0f8 55%, #dadbee 66%, #d5e2f8 72%, #dadef0 76%, #e1ecf8 84%, #e1eef8 100%);
}
.weather {
    justify-self: start;
    align-items: flex-start;
    gap: 8px;
    padding: 10px 0 0 28px;
    text-align: left;
    font-size: 18px;
    line-height: 24px;
}
.weather em {
    font-style: normal;
    color: #555;
}
.dock {
    display: flex;
    align-items: center;
}
.dock-item {
    width: 56px;
    height: 58px;
    margin: 0 5px;
    position: relative;
    border-radius: 6px;
}
.dock-item.running {
    background: #ecf0fb;
    box-shadow: 0 0 1px #9aa6bd;
}
.dock-item.open::after,
.dock-item.running::after {
    content: "";
    position: absolute;
    bottom: 0;
    width: 9px;
    height: 5px;
    border-radius: 3px;
    background: #7c7f88;
}
.dock-item.running::after {
    width: 24px;
    background: #0a78d4;
}
.search {
    display: flex;
    align-items: center;
    gap: 16px;
    width: 328px;
    height: 46px;
    margin: 0 5px;
    padding: 0 16px;
    border: 1px solid #c3cce0;
    border-bottom-color: #a9b3c9;
    border-radius: 23px;
    background: #f2f5fd;
}
.search input {
    flex: 1;
    min-width: 0;
    padding: 0;
    border: none;
    outline: none;
    background: none;
    font: 20px/28px "Open Sans", sans-serif;
}
.search input::placeholder {
    color: #5c5c5c;
}
.tray {
    display: flex;
    justify-content: flex-end;
    align-items: center;
    padding: 0 32px 2px 0;
    font-size: 18px;
    line-height: 24px;
}
.tray button {
    margin-left: 26px;
}
.tray .onedrive {
    margin-left: 28px;
}
.tray .lang {
    text-align: center;
}
.tray .system {
    gap: 10px;
}
.tray .clock {
    margin-left: 22px;
    text-align: right;
}
.tray .bell {
    margin-left: 13px;
}
```
